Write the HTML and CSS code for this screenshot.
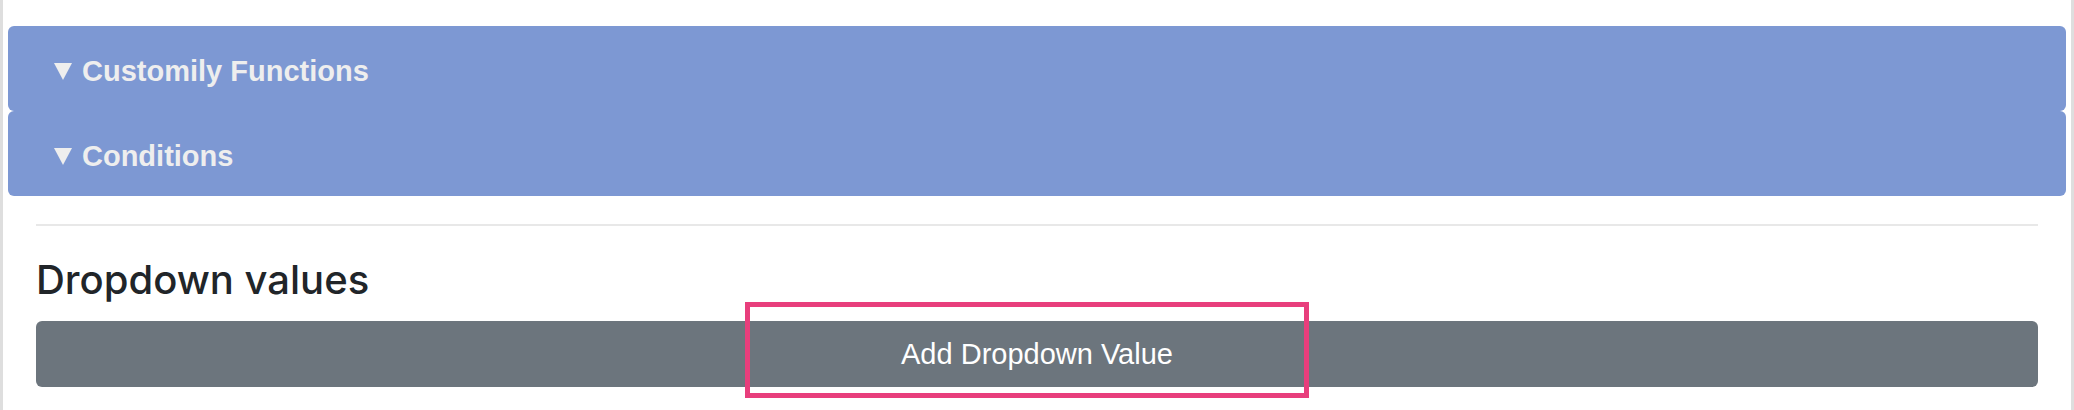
FILE: index.html
```html
<!DOCTYPE html>
<html lang="en">
<head>
  <meta charset="UTF-8">
  <meta name="viewport" content="width=device-width, initial-scale=1.0">
  <title>Dropdown values</title>
  <link rel="stylesheet" href="styles.css">
</head>
<body>
  <div class="page">
    <div class="panel">
      <svg class="caret" width="18" height="17" viewBox="0 0 18 17"><path d="M0 0H18L9 17Z"/></svg>
      <span>Customily Functions</span>
    </div>
    <div class="panel">
      <svg class="caret" width="18" height="17" viewBox="0 0 18 17"><path d="M0 0H18L9 17Z"/></svg>
      <span>Conditions</span>
    </div>

    <div class="content">
      <hr>
      <h3>Dropdown values</h3>
      <button type="button" class="btn-add">Add Dropdown Value</button>
    </div>

    <div class="highlight"></div>
  </div>
</body>
</html>
```

FILE: styles.css
```css
body {
  margin: 0;
  font-family: "Liberation Sans", Arial, sans-serif;
  background-color: #fff;
}
.page {
  position: relative;
  height: 410px;
  box-sizing: border-box;
  padding: 26px 5px 0;
  border-left: 3px solid #dedede;
  border-right: 3px solid #dedede;
}
.panel {
  display: flex;
  align-items: center;
  gap: 10px;
  height: 85px;
  box-sizing: border-box;
  padding: 6px 0 0 46px;
  background-color: #7d98d3;
  border-radius: 6px;
  color: #eeeeee;
  font-size: 29px;
  font-weight: bold;
}
.caret {
  fill: #eeeeee;
  flex-shrink: 0;
}
.content {
  padding: 0 28px;
}
hr {
  margin: 28px 0 0;
  border: none;
  border-top: 2px solid #e8e8e8;
}
h3 {
  margin: 29px 0 16px;
  font-family: Inter, "Liberation Sans", sans-serif;
  font-size: 40px;
  font-weight: 500;
  line-height: 1.25;
  color: #212529;
}
.btn-add {
  display: block;
  width: 100%;
  height: 66px;
  border: none;
  border-radius: 6px;
  background-color: #6c757d;
  color: #fff;
  font-family: inherit;
  font-size: 29px;
  cursor: pointer;
}
.highlight {
  position: absolute;
  left: 742px;
  top: 302px;
  width: 564px;
  height: 96px;
  box-sizing: border-box;
  border: 5px solid #e83e7c;
}
```
